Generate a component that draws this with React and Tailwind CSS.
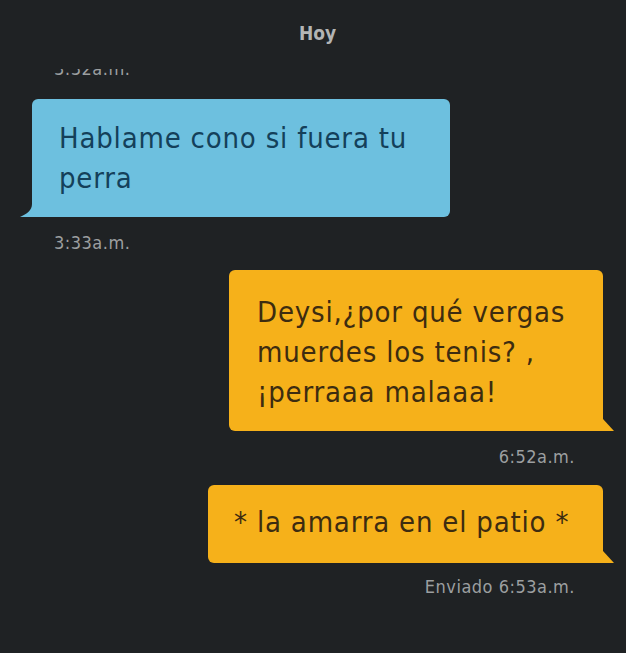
export default function App() {
  const font = { fontFamily: '"DejaVu Sans Condensed", "DejaVu Sans", sans-serif', fontStretch: "condensed" };
  return (
    <div className="w-[626px] h-[653px] bg-[#1f2224] overflow-hidden" style={font}>
      <div className="pt-[22px] pl-[9px] text-center text-[19px] font-bold leading-[22px] text-[#b3b5b5]">Hoy</div>
      <div className="mt-[25px] ml-[54px] h-[9px] overflow-hidden flex items-end">
        <span className="text-[18px] leading-[18px] text-[#9c9fa0] tracking-[0.5px]">3:32a.m.</span>
      </div>
      <div className="mt-[21px] ml-[32px] relative w-[418px] h-[118px] bg-[#6dc0df] rounded-[6px] rounded-bl-none pl-[27px] pt-[19px] text-[29px] leading-[40px] tracking-[0.8px] text-[#14405a]">
        <div>Hablame cono si fuera tu</div>
        <div>perra</div>
        <svg className="absolute left-[-12px] bottom-0" width="13" height="13" viewBox="0 0 13 13">
          <path d="M13 0 L12 0 C12 6 7 10 0 13 L13 13 Z" fill="#6dc0df" />
        </svg>
      </div>
      <div className="mt-[16px] ml-[54px] text-[18px] leading-[20px] text-[#9c9fa0] tracking-[0.5px]">3:33a.m.</div>
      <div className="mt-[17px] flex justify-end pr-[23px]">
        <div className="relative w-[374px] h-[161px] bg-[#f6b11a] rounded-[6px] rounded-br-none pl-[28px] pt-[22px] text-[29px] leading-[40px] tracking-[0.8px] text-[#3d2c10]">
          <div>Deysi,¿por qué vergas</div>
          <div>muerdes los tenis? ,</div>
          <div>¡perraaa malaaa!</div>
          <svg className="absolute right-[-11px] bottom-0" width="12" height="12" viewBox="0 0 12 12">
            <path d="M0 0 L1 0 L12 12 L0 12 Z" fill="#f6b11a" />
          </svg>
        </div>
      </div>
      <div className="mt-[16px] pr-[51px] text-right text-[18px] leading-[20px] text-[#9c9fa0] tracking-[0.5px]">6:52a.m.</div>
      <div className="mt-[18px] flex justify-end pr-[23px]">
        <div className="relative w-[395px] h-[78px] bg-[#f6b11a] rounded-[6px] rounded-br-none pl-[26px] pt-[17px] text-[29px] leading-[40px] tracking-[0.8px] text-[#3d2c10]">
          <div>* la amarra en el patio *</div>
          <svg className="absolute right-[-11px] bottom-0" width="12" height="12" viewBox="0 0 12 12">
            <path d="M0 0 L1 0 L12 12 L0 12 Z" fill="#f6b11a" />
          </svg>
        </div>
      </div>
      <div className="mt-[14px] pr-[51px] text-right text-[18px] leading-[20px] text-[#9c9fa0] tracking-[0.5px]">Enviado 6:53a.m.</div>
    </div>
  );
}
